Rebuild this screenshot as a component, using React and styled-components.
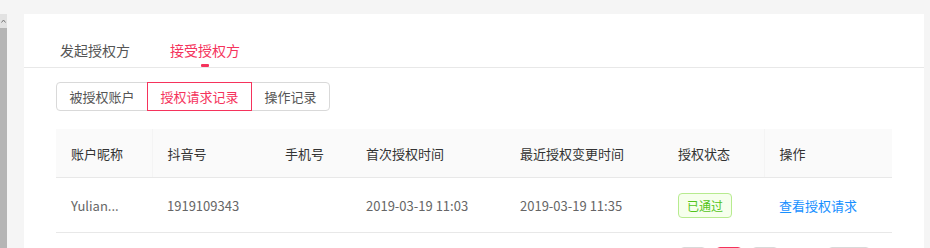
import React from 'react';
import styled, { createGlobalStyle } from 'styled-components';

const GlobalStyle = createGlobalStyle`
  html, body {
    margin: 0;
    padding: 0;
    background: #f5f5f5;
  }
  body {
    font-family: 'Noto Sans CJK SC', 'Noto Sans', sans-serif;
    -webkit-font-smoothing: antialiased;
  }
`;

const RED = '#f5335c';

const columns = [
  { key: 'name', title: '账户昵称', width: 96, fixed: 'left' },
  { key: 'douyin', title: '抖音号', width: 118 },
  { key: 'phone', title: '手机号', width: 81 },
  { key: 'first', title: '首次授权时间', width: 154 },
  { key: 'last', title: '最近授权变更时间', width: 158 },
  { key: 'status', title: '授权状态', width: 101 },
  { key: 'action', title: '操作', width: 128, fixed: 'right' },
];

const rows = [
  {
    id: 1,
    name: 'Yulian...',
    douyin: '1919109343',
    phone: '',
    first: '2019-03-19 11:03',
    last: '2019-03-19 11:35',
    status: '已通过',
  },
];

const App = () => {
  const [tab, setTab] = React.useState(1);
  const [sub, setSub] = React.useState(1);

  return (
    <>
      <GlobalStyle />
      <Page>
        <ScrollTrack>
          <ScrollArrow>
            <svg width="5" height="4" viewBox="0 0 5 4">
              <path d="M0.5 3.5 L2.5 1 L4.5 3.5" fill="none" stroke="#777" strokeWidth="1" />
            </svg>
          </ScrollArrow>
          <ScrollThumb />
        </ScrollTrack>

        <Card>
          <TabNav>
            {['发起授权方', '接受授权方'].map((t, i) => (
              <TabItem key={t} $active={tab === i} onClick={() => setTab(i)}>
                {t}
                {tab === i && <TabInk />}
              </TabItem>
            ))}
          </TabNav>

          <Body>
            <ButtonGroup>
              {['被授权账户', '授权请求记录', '操作记录'].map((b, i) => (
                <GroupButton key={b} $active={sub === i} onClick={() => setSub(i)}>
                  {b}
                </GroupButton>
              ))}
            </ButtonGroup>

            <Table>
              <colgroup>
                {columns.map(c => (
                  <col key={c.key} style={{ width: c.width }} />
                ))}
              </colgroup>
              <thead>
                <tr>
                  {columns.map(c => (
                    <Th key={c.key} $fixed={c.fixed}>{c.title}</Th>
                  ))}
                </tr>
              </thead>
              <tbody>
                {rows.map(r => (
                  <tr key={r.id}>
                    <Td>{r.name}</Td>
                    <Td>{r.douyin}</Td>
                    <Td>{r.phone}</Td>
                    <Td>{r.first}</Td>
                    <Td>{r.last}</Td>
                    <Td><Tag>{r.status}</Tag></Td>
                    <Td><Link>查看授权请求</Link></Td>
                  </tr>
                ))}
              </tbody>
            </Table>

            <Pagination>
              <PageBox />
              <PageBox $active />
              <PageBox />
              <PageSize />
            </Pagination>
          </Body>
        </Card>
      </Page>
    </>
  );
};

export default App;

const Page = styled.div`
  display: flex;
  align-items: stretch;
  height: 248px;
  overflow: hidden;
  padding-top: 14px;
  box-sizing: border-box;
`;

const ScrollTrack = styled.div`
  width: 7px;
  display: flex;
  flex-direction: column;
  margin-right: 17px;
`;

const ScrollArrow = styled.div`
  height: 14px;
  flex-shrink: 0;
  background: #e2e2e2;
  display: flex;
  justify-content: center;
  padding-top: 5px;
  box-sizing: border-box;
`;

const ScrollThumb = styled.div`
  flex: 1;
  background: #b5b5b5;
`;

const Card = styled.div`
  width: 900px;
  background: #fff;
  display: flex;
  flex-direction: column;
`;

const TabNav = styled.div`
  display: flex;
  flex-shrink: 0;
  align-items: flex-end;
  height: 53px;
  gap: 40px;
  padding-left: 36px;
  border-bottom: 1px solid #e8e8e8;
`;

const TabItem = styled.div`
  position: relative;
  font-size: 14px;
  line-height: 22px;
  padding-bottom: 6px;
  color: ${p => (p.$active ? RED : '#555')};
  cursor: pointer;
`;

const TabInk = styled.span`
  position: absolute;
  left: 50%;
  bottom: 0;
  width: 8px;
  height: 3px;
  margin-left: -4px;
  border-radius: 1px;
  background: ${RED};
`;

const Body = styled.div`
  flex-shrink: 0;
  padding: 14px 32px 0;
  display: flex;
  flex-direction: column;
`;

const ButtonGroup = styled.div`
  display: flex;
  align-self: flex-start;
`;

const GroupButton = styled.button`
  font-family: inherit;
  font-size: 13px;
  height: 29px;
  padding: 0 12.5px;
  margin: 0;
  background: #fff;
  cursor: pointer;
  color: ${p => (p.$active ? RED : '#555')};
  border: 1px solid ${p => (p.$active ? RED : '#d9d9d9')};
  position: relative;
  z-index: ${p => (p.$active ? 1 : 0)};
  & + & {
    margin-left: -1px;
  }
  &:first-child {
    border-radius: 4px 0 0 4px;
  }
  &:last-child {
    border-radius: 0 4px 4px 0;
  }
`;

const Table = styled.table`
  margin-top: 18px;
  width: 836px;
  table-layout: fixed;
  border-collapse: collapse;
`;

const Th = styled.th`
  height: 48px;
  padding: 0 0 0 15px;
  text-align: left;
  font-weight: normal;
  font-size: 13px;
  color: #333;
  background: #fafafa;
  border-bottom: 1px solid #e8e8e8;
  border-right: ${p => (p.$fixed === 'left' ? '1px solid #f4f4f4' : 'none')};
  border-left: ${p => (p.$fixed === 'right' ? '1px solid #f4f4f4' : 'none')};
`;

const Td = styled.td`
  height: 54px;
  padding: 0 0 0 15px;
  font-size: 13px;
  color: #666;
  border-bottom: 1px solid #e8e8e8;
  white-space: nowrap;
  overflow: hidden;
`;

const Tag = styled.span`
  display: inline-block;
  height: 25px;
  line-height: 23px;
  padding: 0 8px;
  box-sizing: border-box;
  font-size: 12px;
  color: #52c41a;
  background: #f6ffed;
  border: 1px solid #b7eb8f;
  border-radius: 4px;
`;

const Link = styled.a`
  color: #1890ff;
  cursor: pointer;
`;

const Pagination = styled.div`
  display: flex;
  margin-top: 14px;
  padding-left: 624px;
  gap: 10px;
`;

const PageBox = styled.div`
  width: 26px;
  height: 26px;
  box-sizing: border-box;
  border: 1px solid ${p => (p.$active ? RED : '#d9d9d9')};
  border-radius: 4px;
`;

const PageSize = styled(PageBox)`
  width: 42px;
  margin-left: 40px;
`;
